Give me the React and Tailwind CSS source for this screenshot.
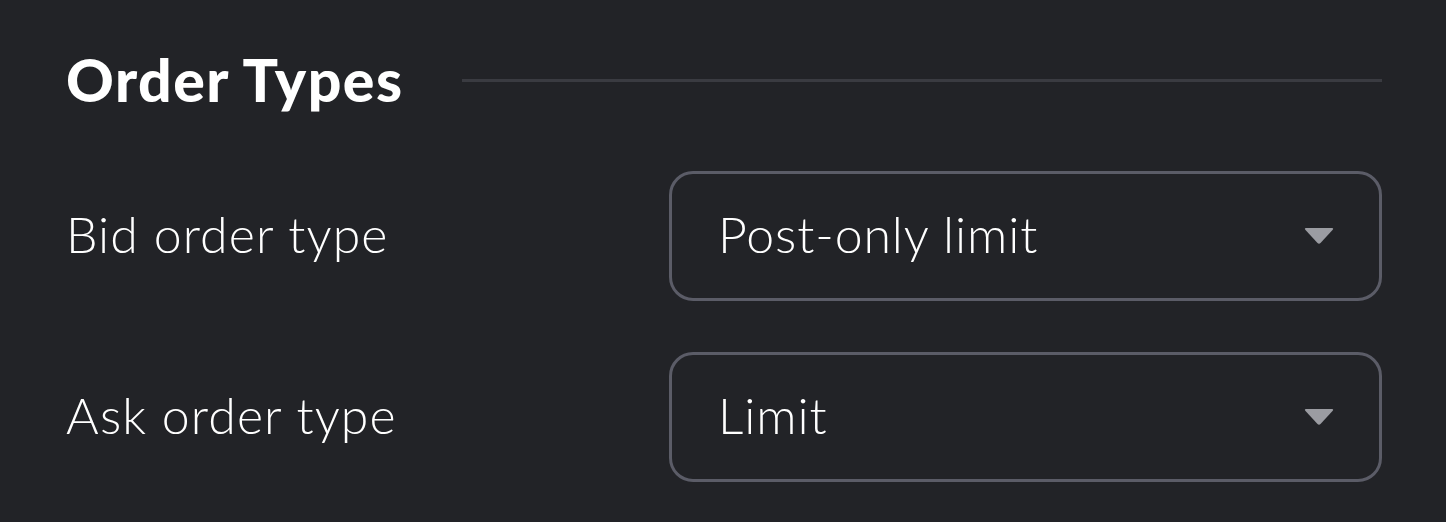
import React from "react";

function Caret() {
  return (
    <svg width="32" height="20" viewBox="0 0 32 20" className="shrink-0">
      <path d="M3 2 H29 Q31 2 29.5 4 L17.5 17 Q16 18.6 14.5 17 L2.5 4 Q1 2 3 2 Z" fill="#9b9ca2" />
    </svg>
  );
}

function Row({ label, value }) {
  return (
    <div className="flex items-center">
      <div className="w-[603px] shrink-0 text-[50px] text-white font-light tracking-[1.1px] leading-none pb-[4px]">{label}</div>
      <div className="flex-1 h-[130px] rounded-[24px] border-[3px] border-[#5b5c67] flex items-center pl-[46px] pr-[44px]">
        <span className="flex-1 text-[50px] text-white font-light tracking-[0.9px] leading-none pb-[4px]">{value}</span>
        <Caret />
      </div>
    </div>
  );
}

export default function App() {
  return (
    <div
      className="w-[1446px] h-[522px] bg-[#222327] pl-[66px] pr-[64px] pt-[45px]"
      style={{ fontFamily: "Lato, 'Open Sans', sans-serif" }}
    >
      <div className="flex items-center h-[70px]">
        <h2 className="text-[59px] font-black tracking-[1.5px] text-white leading-none pb-[2px]">Order Types</h2>
        <div className="flex-1 h-[3px] bg-[#3a3b41] ml-[58px]" />
      </div>
      <div className="mt-[56px] flex flex-col gap-[51px]">
        <Row label="Bid order type" value="Post-only limit" />
        <Row label="Ask order type" value="Limit" />
      </div>
    </div>
  );
}
